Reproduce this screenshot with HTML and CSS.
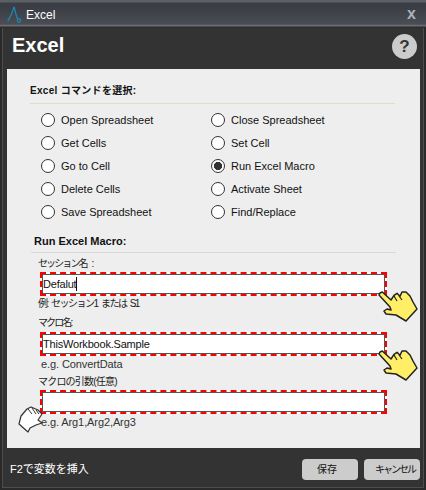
FILE: index.html
```html
<!DOCTYPE html>
<html lang="ja">
<head>
<meta charset="utf-8">
<title>Excel</title>
<link rel="stylesheet" href="styles.css">
</head>
<body>
<div class="window">
  <div class="titlebar">
    <svg class="logo" width="15" height="17" viewBox="0 0 15 17"><path d="M0.800 15.200C3.500 11 5.800 5.500 7.200 0.800C8 5.500 9.500 10.500 10.800 13.800" fill="none" stroke="#1f86b0" stroke-width="1.300"/><circle cx="12" cy="14.600" r="1.700" fill="none" stroke="#1f86b0" stroke-width="1.200"/></svg>
    <span class="title-text">Excel</span>
    <span class="close">x</span>
  </div>
  <div class="header">
    <h1>Excel</h1>
    <span class="help">?</span>
  </div>
  <div class="panel">
    <div class="section-label">Excel コマンドを選択:</div>
    <div class="rule"></div>
    <div class="radios">
      <label class="radio"><i></i>Open Spreadsheet</label>
      <label class="radio"><i></i>Close Spreadsheet</label>
      <label class="radio"><i></i>Get Cells</label>
      <label class="radio"><i></i>Set Cell</label>
      <label class="radio"><i></i>Go to Cell</label>
      <label class="radio on"><i></i>Run Excel Macro</label>
      <label class="radio"><i></i>Delete Cells</label>
      <label class="radio"><i></i>Activate Sheet</label>
      <label class="radio"><i></i>Save Spreadsheet</label>
      <label class="radio"><i></i>Find/Replace</label>
    </div>
    <div class="sub-label">Run Excel Macro:</div>
    <div class="rule rule-sub"></div>
    <div class="field field-first">
      <div class="field-label">セッション名 :</div>
      <div class="mark"><div class="input">Defalut<b class="caret"></b></div></div>
      <div class="hint hint-first">例: セッション1 または S1</div>
    </div>
    <div class="field">
      <div class="field-label">マクロ名:</div>
      <div class="mark"><div class="input">ThisWorkbook.Sample</div></div>
      <div class="hint">e.g. ConvertData</div>
    </div>
    <div class="field field-last">
      <div class="field-label">マクロの引数(任意)</div>
      <div class="mark"><div class="input"></div></div>
      <div class="hint">e.g. Arg1,Arg2,Arg3</div>
    </div>
    <svg class="hand hand-a" width="42" height="34" viewBox="-1 -1 42 34"><use href="#hand-y"/></svg>
    <svg class="hand hand-b" width="42" height="34" viewBox="-1 -1 42 34"><use href="#hand-y"/></svg>
    <svg class="hand hand-c" width="28" height="28" viewBox="0 0 28 28"><path d="M1 18L3 10L9 3L13 1L20 4L24 8L20 14L24 17L18 19L12 22L10 26Z" fill="#fff" stroke="#333" stroke-width="1.200" stroke-linejoin="round"/><path d="M10 3L14 8M14 2L18 8M18 4L21 8" fill="none" stroke="#333"/></svg>
  </div>
  <div class="footer">
    <span class="f2">F2で変数を挿入</span>
    <span class="btn btn-save">保存</span>
    <span class="btn btn-cancel">キャンセル</span>
  </div>
</div>
<svg class="defs" width="0" height="0"><defs><g id="hand-y"><path d="M0 3L1 1L3.300 0L12 8L15 3.300L18 1.300L21 4.300L23 0L27 0L31 4L34 10L38 17L27 29L17 23L7 22L5 19L8 17L12 18L11 15Z" fill="#ffef66" stroke="#222" stroke-width="1.500" stroke-linejoin="round"/><path d="M15 4L18 9M20 4L23 8" fill="none" stroke="#222" stroke-width="1.200"/></g></defs></svg>
</body>
</html>
```
FILE: styles.css
```css
* { box-sizing: border-box; }
html, body { margin: 0; padding: 0; }
body { width: 426px; height: 490px; overflow: hidden; font-family: "Liberation Sans", "Noto Sans CJK JP", sans-serif; font-size: 12px; color: #111; background: #333; }
.window { width: 426px; height: 490px; display: flex; flex-direction: column; background: #333; border: solid #2a2a2a; border-width: 0 2px 2px; box-shadow: inset 1px 0 #4d4d4d, inset -1px 0 #4d4d4d, inset 0 -1px #4d4d4d; }
.titlebar { height: 28px; margin: 0 -2px; padding: 5px 9px 0 7px; display: flex; align-items: flex-start; background: linear-gradient(#5b6067 0, #5b6067 2px, #3b3e44 3px, #3b3e44 8px, #4a4d54 24px, #70747a 26px, #2a2a2a 27px); color: #fff; }
.logo { flex: none; margin-top: 1px; }
.title-text { margin-left: 4px; font-size: 12px; line-height: 20px; flex: 1; }
.close { font-size: 16px; font-weight: bold; color: #a9b2bc; line-height: 18px; margin-right: 1px; }
.header { height: 41px; display: flex; align-items: flex-start; padding: 4px 4px 0 10px; }
h1 { margin: 0; flex: 1; font-size: 20px; line-height: 26px; font-weight: bold; color: #fff; }
.help { width: 25px; height: 25px; margin: 2px 3px 0 0; border-radius: 50%; background: #ccc; color: #333; font-size: 17px; font-weight: bold; line-height: 25px; text-align: center; }
.panel { position: relative; height: 379px; margin: 0 4px 0 5px; padding: 15px 0 0 23px; background: #eee; }
.section-label { font-size: 10px; font-weight: bold; line-height: 13px; letter-spacing: 0.3px; }
.rule { width: 365px; height: 1px; margin-top: 6px; background: #deddc8; }
.radios { display: grid; grid-template-columns: 170px 170px; grid-auto-rows: 23px; margin: 4px 0 0 11px; }
.radio { display: flex; align-items: center; font-size: 11px; }
.radio i { flex: none; width: 14px; height: 14px; margin-right: 6px; border: 1px solid #333; border-radius: 50%; background: #fff; }
.radio.on i { background: radial-gradient(circle, #333 0, #333 3.8px, #fff 4.4px); }
.sub-label { margin: 11px 0 0 4px; font-size: 11px; font-weight: bold; line-height: 14px; }
.rule-sub { margin: 4px 0 0 1px; height: 1px; background: #d8d8d8; }
.field { margin-left: 12px; }
.field-label { font-size: 10px; line-height: 14px; margin-left: -4px; padding-top: 3px; height: 19px; letter-spacing: -1.9px; word-spacing: 4px; color: #222; }
.field-first .field-label { padding-top: 4px; }
.field-last .field-label { letter-spacing: -0.8px; height: 17px; padding-top: 2px; }
.mark { width: 347px; height: 24px; margin-left: -2px; border: 2px dashed #f00; background: #fff; }
.input { height: 20px; border: 1px solid #555; background: #fff; font-size: 11px; line-height: 18px; letter-spacing: -0.2px; color: #111; }
.caret { display: inline-block; width: 1px; height: 14px; vertical-align: -3px; background: #111; }
.hint { font-size: 11px; line-height: 14px; height: 17px; padding-top: 1px; color: #333; margin-left: -1px; letter-spacing: -0.1px; }
.field-last .hint { padding-top: 1px; }
.hint-first { font-size: 10px; margin-left: -4px; letter-spacing: -1.5px; word-spacing: 2px; color: #222; height: 17px; }
.hand { position: absolute; }
.hand-a { left: 371px; top: 222px; }
.hand-b { left: 371px; top: 281px; }
.hand-c { left: 11px; top: 337px; }
.footer { flex: 1; display: flex; align-items: flex-start; padding: 11px 4px 0 8px; }
.f2 { flex: 1; color: #fff; font-size: 11px; line-height: 20px; }
.btn { width: 56px; height: 21px; margin-left: 6px; border-radius: 4px; background: #ccc; font-size: 10px; line-height: 21px; text-align: center; color: #111; }
.btn-save { padding-right: 6px; }
.btn-cancel { padding-left: 6px; letter-spacing: -2px; }
.defs { position: absolute; }
```
